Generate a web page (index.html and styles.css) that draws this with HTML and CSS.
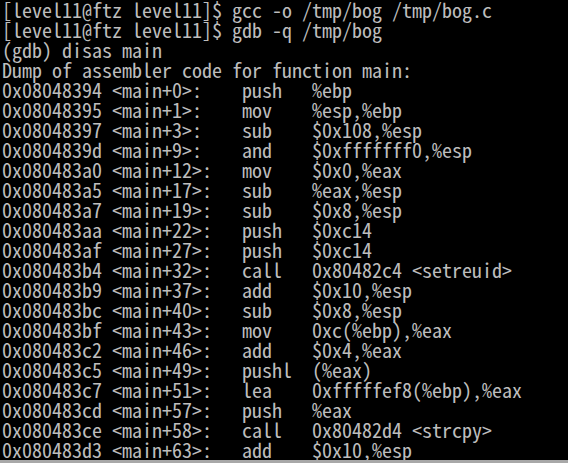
FILE: index.html
```html
<!DOCTYPE html>
<html>
<head>
<meta charset="utf-8">
<link rel="stylesheet" href="styles.css">
</head>
<body>
<div class="term"><pre class="out">[level11@ftz level11]$ gcc -o /tmp/bog /tmp/bog.c
[level11@ftz level11]$ gdb -q /tmp/bog
(gdb) disas main
Dump of assembler code for function main:
0x08048394 &lt;main+0&gt;:    push   %ebp
0x08048395 &lt;main+1&gt;:    mov    %esp,%ebp
0x08048397 &lt;main+3&gt;:    sub    $0x108,%esp
0x0804839d &lt;main+9&gt;:    and    $0xfffffff0,%esp
0x080483a0 &lt;main+12&gt;:   mov    $0x0,%eax
0x080483a5 &lt;main+17&gt;:   sub    %eax,%esp
0x080483a7 &lt;main+19&gt;:   sub    $0x8,%esp
0x080483aa &lt;main+22&gt;:   push   $0xc14
0x080483af &lt;main+27&gt;:   push   $0xc14
0x080483b4 &lt;main+32&gt;:   call   0x80482c4 &lt;setreuid&gt;
0x080483b9 &lt;main+37&gt;:   add    $0x10,%esp
0x080483bc &lt;main+40&gt;:   sub    $0x8,%esp
0x080483bf &lt;main+43&gt;:   mov    0xc(%ebp),%eax
0x080483c2 &lt;main+46&gt;:   add    $0x4,%eax
0x080483c5 &lt;main+49&gt;:   pushl  (%eax)
0x080483c7 &lt;main+51&gt;:   lea    0xfffffef8(%ebp),%eax
0x080483cd &lt;main+57&gt;:   push   %eax
0x080483ce &lt;main+58&gt;:   call   0x80482d4 &lt;strcpy&gt;
0x080483d3 &lt;main+63&gt;:   add    $0x10,%esp</pre></div>
</body>
</html>
```
FILE: styles.css
```css
html, body {
  margin: 0;
  padding: 0;
  background: #000;
}
.term {
  width: 568px;
  height: 460px;
  background: #000;
  border-bottom: 3px solid #a8a8a8;
  overflow: hidden;
}
.out {
  margin: 0;
  padding: 0 0 0 2px;
  font-family: "Noto Sans Mono CJK KR", "Noto Sans Mono CJK SC", "DejaVu Sans Mono", monospace;
  font-size: 20px;
  line-height: 20px;
  color: #bdbdbd;
  white-space: pre;
}
```
